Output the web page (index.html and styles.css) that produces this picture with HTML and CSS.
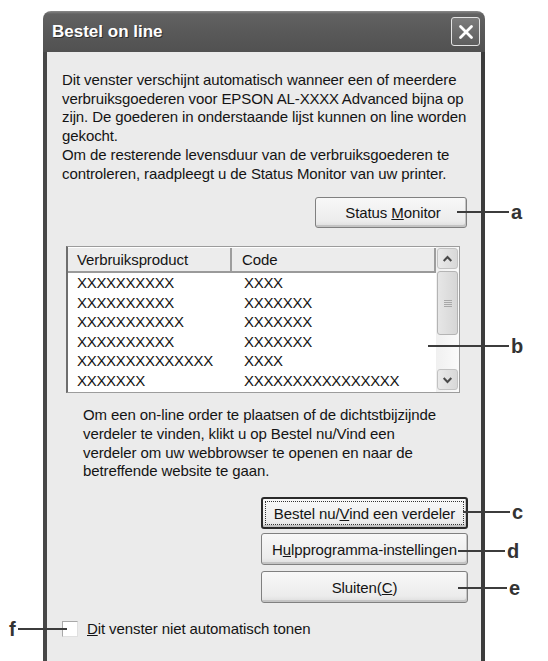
FILE: index.html
```html
<!DOCTYPE html>
<html>
<head>
<meta charset="utf-8">
<title>Bestel on line</title>
<link rel="stylesheet" href="styles.css">
</head>
<body>
<div class="stage">
  <div class="window">
    <div class="titlebar">
      <span class="title">Bestel on line</span>
      <span class="close">
        <svg width="18" height="18" viewBox="0 0 18 18"><path d="M3.5 3.5 L14.5 14.5 M14.5 3.5 L3.5 14.5" stroke="#fff" stroke-width="2.8" stroke-linecap="round" fill="none"/></svg>
      </span>
    </div>
    <div class="client">
      <p class="intro">Dit venster verschijnt automatisch wanneer een of meerdere<br>verbruiksgoederen voor EPSON AL-<span class="xs">XXXX</span> Advanced bijna op<br>zijn. De goederen in onderstaande lijst kunnen on line worden<br>gekocht.<br>Om de resterende levensduur van de verbruiksgoederen te<br>controleren, raadpleegt u de Status Monitor van uw printer.</p>
      <div class="status-row"><button class="btn btn-status"><span class="lbl">Status <u>M</u>onitor</span></button></div>
      <div class="list">
        <div class="list-main">
          <div class="lv-head"><span class="c1">Verbruiksproduct</span><span class="c2">Code</span></div>
          <div class="lv-row"><span class="c1 xs">XXXXXXXXXX</span><span class="c2 xs">XXXX</span></div>
          <div class="lv-row"><span class="c1 xs">XXXXXXXXXX</span><span class="c2 xs">XXXXXXX</span></div>
          <div class="lv-row"><span class="c1 xs">XXXXXXXXXXX</span><span class="c2 xs">XXXXXXX</span></div>
          <div class="lv-row"><span class="c1 xs">XXXXXXXXXX</span><span class="c2 xs">XXXXXXX</span></div>
          <div class="lv-row"><span class="c1 xs">XXXXXXXXXXXXXX</span><span class="c2 xs">XXXX</span></div>
          <div class="lv-row"><span class="c1 xs">XXXXXXX</span><span class="c2 xs">XXXXXXXXXXXXXXXX</span></div>
        </div>
        <div class="scrollbar">
          <div class="sb-btn"><svg width="20" height="20" viewBox="0 0 20 20"><path d="M6 12 L10 8 L14 12" stroke="#4a4a4a" stroke-width="2.2" fill="none"/></svg></div>
          <div class="sb-track">
            <div class="sb-thumb"><span class="grip"></span></div>
          </div>
          <div class="sb-btn"><svg width="20" height="20" viewBox="0 0 20 20"><path d="M6 8 L10 12 L14 8" stroke="#4a4a4a" stroke-width="2.2" fill="none"/></svg></div>
        </div>
      </div>
      <p class="info">Om een on-line order te plaatsen of de dichtstbijzijnde<br>verdeler te vinden, klikt u op Bestel nu/Vind een<br>verdeler om uw webbrowser te openen en naar de<br>betreffende website te gaan.</p>
      <div class="actions">
        <button class="btn btn-action btn-default"><span class="focus"><span class="lbl">Bestel nu/<u>V</u>ind een verdeler</span></span></button>
        <button class="btn btn-action btn-d"><span class="lbl">H<u>u</u>lpprogramma-instellingen</span></button>
        <button class="btn btn-action btn-e"><span class="lbl">Sluiten(<u>C</u>)</span></button>
      </div>
      <label class="check"><span class="box"></span><span class="check-text"><u>D</u>it venster niet automatisch tonen</span></label>
    </div>
  </div>

  <div class="callout co-a"><span class="cl-line"></span><span class="cl-label">a</span></div>
  <div class="callout co-b"><span class="cl-line"></span><span class="cl-label">b</span></div>
  <div class="callout co-c"><span class="cl-line"></span><span class="cl-label">c</span></div>
  <div class="callout co-d"><span class="cl-line"></span><span class="cl-label">d</span></div>
  <div class="callout co-e"><span class="cl-line"></span><span class="cl-label">e</span></div>
  <div class="callout co-f"><span class="cl-label">f</span><span class="cl-line"></span></div>
</div>
</body>
</html>
```

FILE: styles.css
```css
* { box-sizing: border-box; margin: 0; padding: 0; }
html, body { background: #fff; }
body {
  width: 548px; height: 661px; overflow: hidden;
  font-family: "Liberation Sans", Arial, sans-serif;
  font-size: 15px; letter-spacing: -0.1px; color: #141414;
}
.stage { position: relative; width: 548px; height: 661px; overflow: hidden; }

.window { margin: 11px 0 0 43px; width: 442px; height: 680px; display: flex; flex-direction: column; }
.titlebar {
  height: 41px; flex: none;
  border-radius: 8px 8px 0 0;
  background: linear-gradient(#8a8a8a 0, #626262 3px, #5a5a5a 45%, #515151 100%);
  display: flex; align-items: center; justify-content: space-between;
  padding: 0 5px 0 9px;
}
.title { font-weight: bold; font-size: 17px; letter-spacing: 0; color: #fff; text-shadow: 1px 1px 0 #2e2e2e; }
.close {
  width: 29px; height: 29px; border: 1px solid #e4e4e4; border-radius: 3px;
  background: linear-gradient(#7c7c7c, #5e5e5e);
  display: flex; align-items: center; justify-content: center;
}

.client {
  flex: 1; background: #ebebeb;
  border-left: 4px solid #474747; border-right: 4px solid #3c3c3c;
  padding-top: 19px;
}
.intro { padding-left: 15px; line-height: 18.7px; white-space: nowrap; }
.xs { letter-spacing: -0.3px; }

.status-row { display: flex; justify-content: flex-end; padding-right: 14px; margin-top: 14px; }
.btn {
  font-family: inherit; font-size: 15px; letter-spacing: -0.1px; color: #141414;
  background: linear-gradient(#f8f8f8, #ececec 80%, #dcdcdc);
  border: 1px solid #808080; border-radius: 3px;
  box-shadow: inset -1px -2px 0 #c4c4c4;
  display: flex; align-items: center; justify-content: center;
}
.lbl { white-space: nowrap; }
.btn-status { width: 152px; height: 31px; padding-left: 4px; }

.list {
  margin: 18px 0 0 19px; width: 394px; height: 147px;
  border: 1px solid #9c9c9c; border-left: 2px solid #6e6e6e;
  background: #fff; display: flex; overflow: hidden;
}
.list-main { flex: 1; overflow: hidden; }
.lv-head {
  height: 26px; display: flex; background: #ececec;
  border-bottom: 2px solid #9a9a9a; border-top: 1px solid #fff;
  line-height: 23px;
}
.lv-head .c1 { width: 164px; padding-left: 9px; border-right: 2px solid #9d9d9d; }
.lv-head .c2 { flex: 1; padding-left: 10px; border-right: 2px solid #9d9d9d; }
.lv-row { height: 19.5px; display: flex; line-height: 19.5px; white-space: nowrap; }
.lv-row .c1 { width: 166px; padding-left: 9px; }
.lv-row .c2 { flex: 1; padding-left: 10px; }

.scrollbar { width: 23px; display: flex; flex-direction: column; padding: 1px 1px 2px 1px; background: linear-gradient(90deg, #f0f0f0, #fafafa); }
.sb-btn {
  height: 21px; flex: none; border: 1px solid #c2c2c2; border-radius: 3px;
  background: linear-gradient(90deg, #eaeaea, #d8d8d8);
  display: flex; align-items: center; justify-content: center;
}
.sb-track { flex: 1; padding: 2px 0; }
.sb-thumb {
  height: 64px; border: 1px solid #b4b4b4; border-radius: 3px;
  background: linear-gradient(90deg, #e6e6e6, #d6d6d6);
  display: flex; align-items: center; justify-content: center;
}
.grip { width: 8px; height: 7px; background: repeating-linear-gradient(#a8a8a8 0 1px, transparent 1px 2px); }

.info { margin-top: 13px; padding-left: 36px; line-height: 18.7px; white-space: nowrap; }

.actions { margin-top: 16px; display: flex; flex-direction: column; align-items: flex-end; padding-right: 13px; }
.btn-action { width: 207px; height: 32px; }
.btn-default { border: 2px solid #2a2a2a; padding: 2px; }
.btn-default .focus { flex: 1; align-self: stretch; border: 1px dotted #333; display: flex; align-items: center; justify-content: center; }
.btn-d { margin-top: 4px; }
.btn-e { margin-top: 6px; }

.check { margin-top: 17px; padding-left: 15px; display: flex; align-items: center; gap: 9px; }
.box { width: 16px; height: 16px; background: #fff; border: 1px solid #a8a8a8; border-right-color: #e0e0e0; border-bottom-color: #e0e0e0; }

.callout { position: absolute; height: 24px; display: flex; align-items: center; }
.cl-line { height: 2px; background: #3c3c3c; }
.cl-label { font-weight: bold; font-size: 20px; line-height: 24px; letter-spacing: 0; color: #333; padding-left: 2px; }
.co-a { left: 457px; top: 200px; }
.co-a .cl-line { width: 52px; }
.co-b { left: 428px; top: 334px; }
.co-b .cl-line { width: 81px; }
.co-c { left: 463px; top: 500px; }
.co-c .cl-line { width: 47px; }
.co-d { left: 458px; top: 539px; }
.co-d .cl-line { width: 47px; }
.co-e { left: 458px; top: 576px; }
.co-e .cl-line { width: 49px; }
.co-f { left: 9px; top: 617px; }
.co-f .cl-label { padding: 0 2px 0 0; }
.co-f .cl-line { width: 49px; }
```
